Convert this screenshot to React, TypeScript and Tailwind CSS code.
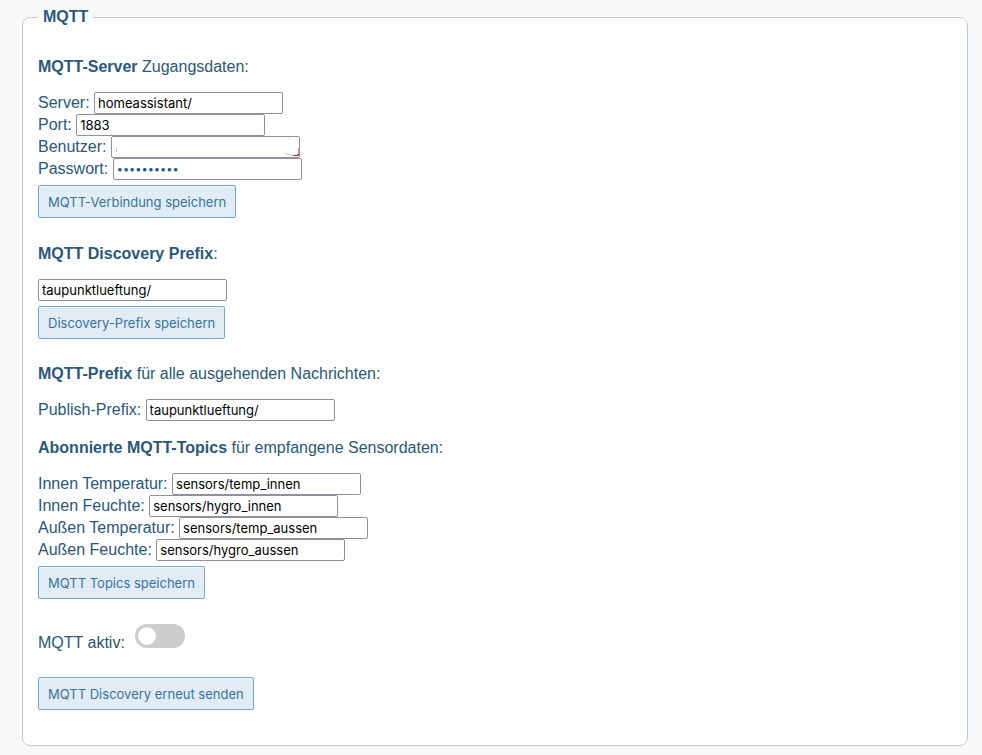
import { useId } from "react";

const button =
  "block h-[33px] rounded-xs border border-[#72a7cf] bg-[#e1ecf4] px-[9px] font-[Inter,sans-serif] text-[13px] leading-4 text-[#39739d] shadow-[inset_0_1px_0_0_rgba(255,255,255,0.7)]";

type FieldProps = {
  label?: string;
  ariaLabel?: string;
  value?: string;
  type?: string;
  children?: React.ReactNode;
};

function Field({ label, ariaLabel, value = "", type = "text", children }: FieldProps) {
  const id = useId();
  return (
    <div className="flex h-[22px] items-start">
      {label && (
        <label htmlFor={id} className="leading-[22px] whitespace-pre">
          {label + " "}
        </label>
      )}
      <span className="relative">
        <input
          id={id}
          type={type}
          aria-label={ariaLabel}
          defaultValue={value}
          className={`block h-[22px] w-[189px] rounded-xs border border-[#8f8f9d] bg-white px-[3px] font-[Inter,sans-serif] ${
            type === "password" ? "text-[11px] text-[#245682]" : "text-[13px] text-black"
          }`}
        />
        {children}
      </span>
    </div>
  );
}

export default function App() {
  return (
    <main className="min-h-screen bg-[#f8f9fb] px-[22px] pt-[7px] pr-[14px] pb-2 font-['Liberation_Sans',Arial,sans-serif] text-base leading-[18px] text-[#2b5878]">
      <fieldset className="rounded-[8px] border border-[#c8c8c8] bg-[#fefefe] px-[15px] pb-[35px]">
        <legend className="px-[5px] leading-5 font-bold">MQTT</legend>

        <section className="pt-[31px]">
          <h2 className="mb-4">
            <b>MQTT-Server</b> Zugangsdaten:
          </h2>
          <Field label="Server:" value="homeassistant/" />
          <Field label="Port:" value="1883" />
          <Field label="Benutzer:">
            <svg className="pointer-events-none absolute inset-0" width="189" height="22" viewBox="0 0 189 22" fill="none" aria-hidden="true">
              <path d="M5.5 12v1M5.5 14v2" stroke="#b5b5bb" />
              <path d="M177 2.5h2" stroke="#ddd" />
              <path d="M174 17.5h2M176 18.5h3M179 19.5h3" stroke="#c9c9cf" />
              <path d="M187.5 12v8" stroke="#f58b93" />
              <path d="M182 19.5h6M186 18.5h2" stroke="#f2313f" />
            </svg>
          </Field>
          <Field label="Passwort:" value="geheim1234" type="password" />
          <button type="button" className={`${button} mt-[5px]`}>
            MQTT-Verbindung speichern
          </button>
        </section>

        <section className="pt-[27px]">
          <h2 className="mb-4">
            <b>MQTT Discovery Prefix</b>:
          </h2>
          <Field ariaLabel="MQTT Discovery Prefix" value="taupunktlueftung/" />
          <button type="button" className={`${button} mt-[5px]`}>
            Discovery-Prefix speichern
          </button>
        </section>

        <section className="pt-[26px]">
          <h2 className="mb-4">
            <b>MQTT-Prefix</b> für alle ausgehenden Nachrichten:
          </h2>
          <Field label="Publish-Prefix:" value="taupunktlueftung/" />
        </section>

        <section className="pt-[18px]">
          <h2 className="mb-4">
            <b>Abonnierte MQTT-Topics</b> für empfangene Sensordaten:
          </h2>
          <Field label="Innen Temperatur:" value="sensors/temp_innen" />
          <Field label="Innen Feuchte:" value="sensors/hygro_innen" />
          <Field label="Außen Temperatur:" value="sensors/temp_aussen" />
          <Field label="Außen Feuchte:" value="sensors/hygro_aussen" />
          <button type="button" className={`${button} mt-[5px]`}>
            MQTT Topics speichern
          </button>
        </section>

        <section className="pt-[25px]">
          <div className="flex items-start gap-[10px]">
            <label htmlFor="mqtt-aktiv" className="pt-[10px]">
              MQTT aktiv:
            </label>
            <input
              id="mqtt-aktiv"
              type="checkbox"
              role="switch"
              className="h-6 w-[50px] appearance-none rounded-full bg-[#ccc] p-[3px] before:block before:size-[18px] before:rounded-full before:bg-white checked:bg-[#39739d] checked:before:ml-auto"
            />
          </div>
          <button type="button" className={`${button} mt-[25px]`}>
            MQTT Discovery erneut senden
          </button>
        </section>
      </fieldset>
    </main>
  );
}
